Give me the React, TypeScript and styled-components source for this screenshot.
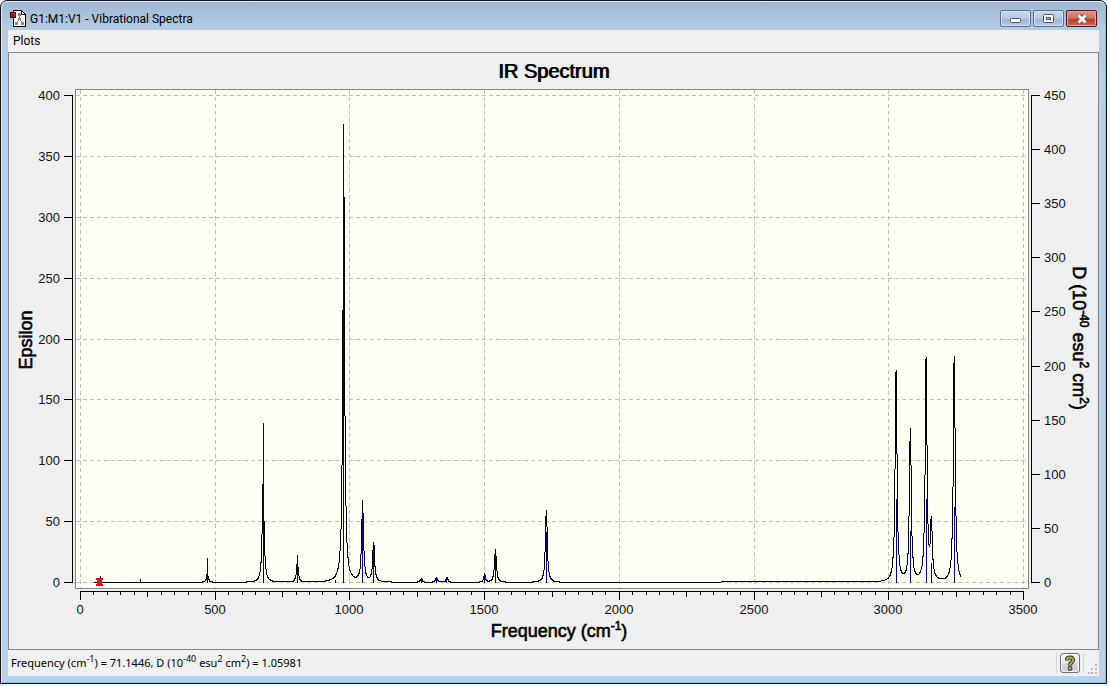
import React from "react";
import styled, { createGlobalStyle } from "styled-components";

const Global = createGlobalStyle`
  * { box-sizing: border-box; }
  html, body, #root { height: 100%; }
  body { margin: 0; background: #f4f7f9; font-family: Roboto, "Open Sans", sans-serif; font-size: 12px; color: #000; }
`;

const Desktop = styled.div`
  min-height: 100vh;
  display: flex;
  padding: 0 3px 2px 0;
`;

const Window = styled.main`
  flex: 1;
  min-width: 0;
  display: flex;
  flex-direction: column;
  border: 1px solid #10141a;
  border-radius: 7px 7px 0 0;
  background: linear-gradient(#a0b7d2 0, #b4cbe4 28px, #b9d1ea 120px);
  box-shadow: inset 0 1px #e4edf6, inset 1px 0 #e4edf6, inset -1px -1px #5fd0e4;
  padding: 0 7px 7px;
`;

const TitleBar = styled.header`
  height: 29px;
  flex: none;
  display: flex;
  align-items: center;
  gap: 4px;
  padding: 6px 2px 0 2px;
`;

const WindowTitle = styled.h1`
  flex: 1;
  margin: 0;
  font-size: 12px;
  line-height: 16px;
  font-weight: 400;
`;

const Controls = styled.div`
  display: flex;
  gap: 2px;
  align-items: center;
`;

const ControlButton = styled.button<{ $danger?: boolean }>`
  width: 31px;
  height: 17px;
  padding: 0;
  display: flex;
  align-items: center;
  justify-content: center;
  border: 1px solid ${(p) => (p.$danger ? "#4e1820" : "#56708f")};
  border-radius: 2px;
  box-shadow: inset 0 0 0 1px ${(p) => (p.$danger ? "#e3a59b" : "#d3e1f0")};
  background: ${(p) =>
    p.$danger
      ? "linear-gradient(#dd9a8c 0, #cd6d5b 50%, #b73b27 51%, #cb6752 100%)"
      : "linear-gradient(#c4d5e8 0, #b3c8e0 50%, #9bb5d3 51%, #b1c8e1 100%)"};
`;

const Client = styled.div`
  flex: 1;
  display: flex;
  flex-direction: column;
  background: #f0f0f0;
`;

const MenuBar = styled.nav`
  height: 22px;
  flex: none;
  display: flex;
`;

const MenuItem = styled.button`
  border: 0;
  padding: 0 5px;
  background: transparent;
  font: 12px/20px Roboto, "Open Sans", sans-serif;
  color: #000;
`;

const PlotPanel = styled.section`
  flex: 1;
  border: 1px solid #828790;
  background: #efefef;
`;

const PlotTitle = styled.h2`
  height: 36px;
  margin: 0;
  padding-top: 6px;
  text-align: center;
  font: 400 20px/24px "Liberation Sans", Arial, sans-serif;
  text-shadow: 1px 0 #000;
`;

const Chart = styled.svg`
  display: block;
  width: 100%;
  height: auto;
  overflow: visible;
  font-family: "Liberation Sans", Arial, sans-serif;
`;

const TickLabel = styled.text`
  font-size: 13px;
  fill: #111;
`;

const AxisTitle = styled.text`
  font-size: 18px;
  text-anchor: middle;
  stroke: #000;
  stroke-width: 0.6;
`;

const AxisSup = styled.tspan`
  font-size: 12px;
`;

const StatusBar = styled.footer`
  height: 26px;
  flex: none;
  display: flex;
  align-items: center;
  padding: 0 1px 0 3px;
`;

const StatusText = styled.output`
  flex: 1;
  font-family: "Noto Sans", "Open Sans", sans-serif;
  font-size: 11px;
  line-height: 16px;

  sup {
    font-size: 9px;
    line-height: 0;
    vertical-align: 5px;
  }
`;

const HelpCell = styled.div`
  display: flex;
  padding: 0 3px;
  margin-right: 4px;
  border: solid #d5d5d5;
  border-width: 0 1px;
`;

const HelpButton = styled.button`
  width: 20px;
  height: 20px;
  padding: 0;
  display: flex;
  align-items: center;
  justify-content: center;
  border: 1px solid #707070;
  border-radius: 3px;
  background: linear-gradient(#f3f3f3, #e8e8e8 50%, #d8d8d8 51%, #cfcfcf);
  box-shadow: inset 0 0 0 1px #fbfbfb;
`;

const Grip = styled.svg`
  align-self: flex-end;
  margin-bottom: 2px;
`;

/* frequency (cm-1), peak epsilon, dipole strength D */
const modes: [number, number, number][] = [
  [76, 0, 5.5],
  [221, 0, 3],
  [471, 7, 22],
  [678, 84, 147],
  [805, 16, 25],
  [945, 0, 2],
  [977, 329, 423],
  [1047, 67, 62],
  [1088, 33, 30],
  [1265, 3, 4],
  [1321, 4, 5],
  [1360, 4, 4],
  [1500, 6, 8],
  [1540, 28, 23],
  [1729, 60, 46],
  [3027, 173, 77],
  [3080, 125, 47],
  [3138.5, 182, 77],
  [3158, 47, 18],
  [3243, 186, 69],
];

const HALF_WIDTH = 4;
const LEFT = 71;
const RIGHT = 1014;
const TOP = 6;
const BASE = 493;

const xOf = (f: number) => Math.round(LEFT + ((RIGHT - LEFT) * f) / 3500);
const yOf = (e: number) => Math.round(BASE - ((BASE - TOP) * e) / 400);
const yOfD = (d: number) => Math.round(BASE - ((BASE - TOP) * d) / 450);

const epsilonAt = (f: number) =>
  modes.reduce((sum, [f0, e]) => sum + e / (1 + ((f - f0) / HALF_WIDTH) ** 2), 0);

const steps = (max: number, step: number) =>
  Array.from({ length: max / step + 1 }, (_, i) => i * step);

/* samples every 0.5 cm-1; the empty band between 1805 and 2950 cm-1 is a single segment */
const curve = steps(3268, 0.5)
  .filter((f) => f >= 50 && (f <= 1805 || f >= 2950))
  .map((f) => `${xOf(f) + 0.5},${yOf(epsilonAt(f)) + 0.5}`)
  .join(" ");

function Spectrum() {
  return (
    <Chart viewBox="0 0 1089 560" role="img" aria-label="IR Spectrum">
      <rect x="66.5" y="0.5" width="953" height="499" fill="#fffff6" stroke="#858585" />
      <g stroke="#bdbdb6" strokeDasharray="4 3" shapeRendering="crispEdges">
        {steps(3500, 500).map((f) => (
          <line key={f} x1={xOf(f) + 0.5} x2={xOf(f) + 0.5} y1="1" y2="499" />
        ))}
        {steps(400, 50).map((e) => (
          <line key={e} x1="67" x2="1019" y1={yOf(e) + 0.5} y2={yOf(e) + 0.5} />
        ))}
      </g>
      <polyline points={curve} fill="none" stroke="#000" strokeLinejoin="bevel" shapeRendering="crispEdges" />
      <g stroke="#000080" shapeRendering="crispEdges">
        {modes.map(([f, , d]) => (
          <line key={f} x1={xOf(f) + 0.5} x2={xOf(f) + 0.5} y1={yOfD(d)} y2={BASE + 1} />
        ))}
      </g>
      <path d="M87 489h7v2h-1v4h1v2h-7v-2h1v-4h-1z" fill="#e01010" shapeRendering="crispEdges" />

      <g stroke="#000" fill="none" shapeRendering="crispEdges">
        <path d={`M63.5 ${TOP}V${BASE + 1}M1022.5 ${TOP}V${BASE + 1}M${LEFT} 502.5H${RIGHT + 1}`} />
        {steps(400, 50).map((e) => (
          <path key={e} d={`M55 ${yOf(e) + 0.5}h8`} />
        ))}
        {steps(450, 50).map((d) => (
          <path key={d} d={`M1023 ${yOfD(d) + 0.5}h8`} />
        ))}
        {steps(3500, 50).map((f) => (
          <path key={f} d={`M${xOf(f) + 0.5} 502v${f % 500 === 0 ? 9 : f % 250 === 0 ? 6 : 4}`} />
        ))}
      </g>
      {steps(400, 50).map((e) => (
        <TickLabel key={e} x="51" y={yOf(e) + 5} textAnchor="end">{e}</TickLabel>
      ))}
      {steps(450, 50).map((d) => (
        <TickLabel key={d} x="1035" y={yOfD(d) + 5}>{d}</TickLabel>
      ))}
      {steps(3500, 500).map((f) => (
        <TickLabel key={f} x={xOf(f)} y="525" textAnchor="middle">{f}</TickLabel>
      ))}
      <AxisTitle transform="translate(23 251) rotate(-90)">Epsilon</AxisTitle>
      <AxisTitle x="550" y="548">
        Frequency (cm<AxisSup dy="-7">-1</AxisSup><tspan dy="7">)</tspan>
      </AxisTitle>
      <AxisTitle transform="translate(1064 249) rotate(90)">
        D (10<AxisSup dy="-7">-40</AxisSup><tspan dy="7"> esu</tspan>
        <AxisSup dy="-7">2</AxisSup><tspan dy="7"> cm</tspan>
        <AxisSup dy="-7">2</AxisSup><tspan dy="7">)</tspan>
      </AxisTitle>
    </Chart>
  );
}

export default function App() {
  return (
    <>
      <Global />
      <Desktop>
        <Window>
          <TitleBar>
            <svg width="16" height="17" viewBox="0 0 16 17" aria-hidden="true">
              <path d="M3.5 .5h8l4 4v12h-12z" fill="#fff" stroke="#000" />
              <path d="M11.5 .5v4h4" fill="none" stroke="#000" />
              <path d="M9.500 4v6M9.500 9l-3 4M9.500 9l3 4" stroke="#777" fill="none" />
              <path d="M8 3h3v3h-3zM8 8h3v2h-3zM5 12h3v3h-3zM11 12h3v3h-3z" fill="#858585" />
              <rect x=".5" y="2.500" width="5" height="5" fill="#b51616" stroke="#3d0808" />
            </svg>
            <WindowTitle>G1:M1:V1 - Vibrational Spectra</WindowTitle>
            <Controls>
              <ControlButton aria-label="Minimize">
                <svg width="11" height="9" viewBox="0 0 11 9">
                  <rect x=".5" y="4.500" width="10" height="4" rx="1" fill="#fff" stroke="#535666" />
                </svg>
              </ControlButton>
              <ControlButton aria-label="Maximize">
                <svg width="11" height="9" viewBox="0 0 11 9">
                  <rect x=".5" y=".5" width="10" height="8" rx="1" fill="#fff" stroke="#535666" />
                  <rect x="3.500" y="3.500" width="4" height="2" fill="#9fb6d0" stroke="#535666" />
                </svg>
              </ControlButton>
              <ControlButton $danger aria-label="Close">
                <svg width="12" height="10" viewBox="0 0 12 10">
                  <path d="M2.500 1.500l7 7M9.500 1.500l-7 7" stroke="#535666" strokeWidth="5" />
                  <path d="M2.500 1.500l7 7M9.500 1.500l-7 7" stroke="#fff" strokeWidth="3" />
                </svg>
              </ControlButton>
            </Controls>
          </TitleBar>
          <Client>
            <MenuBar>
              <MenuItem>Plots</MenuItem>
            </MenuBar>
            <PlotPanel>
              <PlotTitle>IR Spectrum</PlotTitle>
              <Spectrum />
            </PlotPanel>
            <StatusBar>
              <StatusText>
                Frequency (cm<sup>-1</sup>) = 71.1446, D (10<sup>-40</sup> esu<sup>2</sup> cm<sup>2</sup>) = 1.05981
              </StatusText>
              <HelpCell>
                <HelpButton aria-label="Help">
                  <svg width="12" height="16" viewBox="0 0 12 16">
                    <path d="M3 5.500V4.500Q3 2.500 6 2.500T9 5Q9 6.500 7.500 7.500T6 10.500" fill="none" stroke="#333016" strokeWidth="4" />
                    <circle cx="6" cy="13.500" r="2.400" fill="#333016" />
                    <path d="M3 5V4.500Q3 2.500 6 2.500T9 5Q9 6.500 7.500 7.500T6 10" fill="none" stroke="#b8ad68" strokeWidth="2" />
                    <circle cx="6" cy="13.500" r="1.400" fill="#b8ad68" />
                  </svg>
                </HelpButton>
              </HelpCell>
              <Grip width="10" height="10" viewBox="0 0 10 10" aria-hidden="true">
                <path d="M7 0h2v2h-2zM3 4h2v2h-2zM7 4h2v2h-2zM0 8h2v2h-2zM3 8h2v2h-2zM7 8h2v2h-2z" fill="#bcbcbc" />
              </Grip>
            </StatusBar>
          </Client>
        </Window>
      </Desktop>
    </>
  );
}
